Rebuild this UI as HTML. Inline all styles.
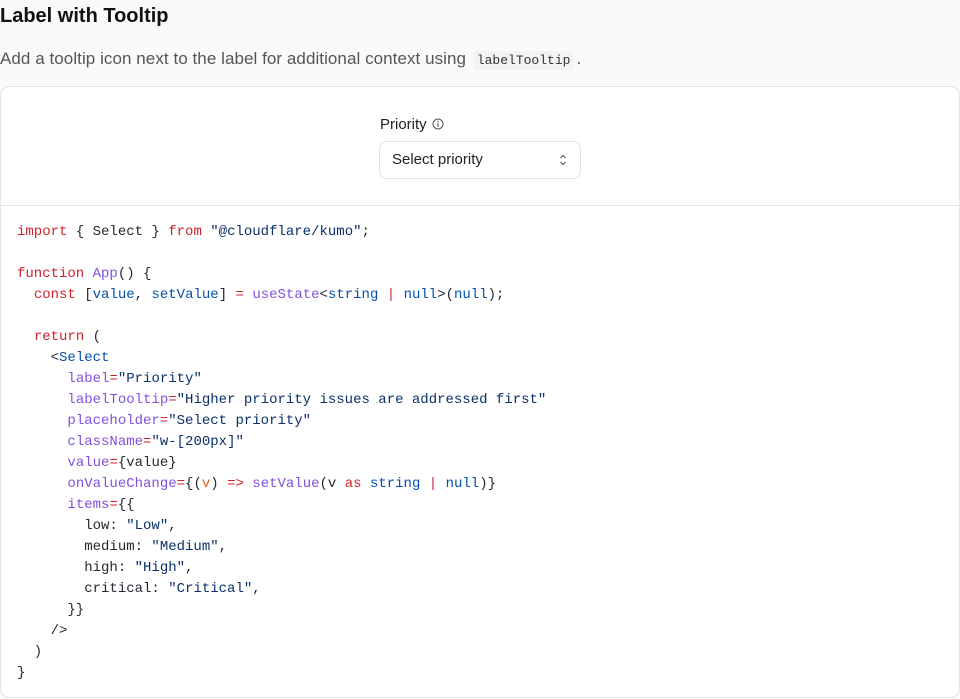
<!DOCTYPE html>
<html><head><style>
html,body{margin:0;height:699px;overflow:hidden}
body{background:#fafafa;font-family:"Liberation Sans",sans-serif;width:960px;position:relative}
h2{position:absolute;left:0;top:3px;margin:0;font-size:20px;font-weight:700;color:#111;line-height:26px}
.desc{position:absolute;left:0;top:48px;font-size:17px;color:#555;line-height:22px;margin:0;letter-spacing:0.06px}
.desc code{font-family:"Liberation Mono",monospace;font-size:13px;color:#333;background:#f3f3f3;padding:2px 4px;border-radius:4px;margin:0 2px;letter-spacing:0}
.card{position:absolute;left:0;top:86px;width:958px;height:610px;border:1px solid #e5e5e5;border-radius:10px;background:#fff;overflow:hidden}
.preview{height:118px;border-bottom:1px solid #e5e5e5;position:relative}
.lbl{position:absolute;left:379px;top:29px;font-size:15px;color:#222;line-height:18px}
.sel{position:absolute;left:378px;top:54px;width:202px;height:38px;border:1px solid #e3e3e3;border-radius:8px;box-sizing:border-box;font-size:15px;color:#222;line-height:36px;padding-left:12px}
pre{margin:0;padding:16px 16px;font-family:"Liberation Mono",monospace;font-size:14px;line-height:21px;color:#24292f}
.k{color:#cf222e}.f{color:#8250df}.b{color:#0550ae}.s{color:#0a3069}.o{color:#e36209}
</style></head><body>
<h2>Label with Tooltip</h2>
<p class="desc">Add a tooltip icon next to the label for additional context using <code>labelTooltip</code>.</p>
<div class="card">
<div class="preview">
<div class="lbl">Priority <svg width="12" height="12" viewBox="0 0 12 12" style="vertical-align:-1px;margin-left:1px"><circle cx="6" cy="6" r="5" fill="none" stroke="#555" stroke-width="1"/><line x1="6" y1="5.2" x2="6" y2="8.7" stroke="#555" stroke-width="1.1"/><circle cx="6" cy="3.5" r=".7" fill="#555"/></svg></div>
<div class="sel">Select priority<svg width="10" height="14" viewBox="0 0 10 14" style="position:absolute;right:12px;top:11px"><path d="M2.5 5 L5 2.5 L7.5 5 M2.5 9 L5 11.5 L7.5 9" fill="none" stroke="#555" stroke-width="1.1"/></svg></div>
</div>
<pre><span class="k">import</span> { Select } <span class="k">from</span> <span class="s">"@cloudflare/kumo"</span>;

<span class="k">function</span> <span class="f">App</span>() {
  <span class="k">const</span> [<span class="b">value</span>, <span class="b">setValue</span>] <span class="k">=</span> <span class="f">useState</span>&lt;<span class="b">string</span> <span class="k">|</span> <span class="b">null</span>&gt;(<span class="b">null</span>);

  <span class="k">return</span> (
    &lt;<span class="b">Select</span>
      <span class="f">label</span><span class="k">=</span><span class="s">"Priority"</span>
      <span class="f">labelTooltip</span><span class="k">=</span><span class="s">"Higher priority issues are addressed first"</span>
      <span class="f">placeholder</span><span class="k">=</span><span class="s">"Select priority"</span>
      <span class="f">className</span><span class="k">=</span><span class="s">"w-[200px]"</span>
      <span class="f">value</span><span class="k">=</span>{value}
      <span class="f">onValueChange</span><span class="k">=</span>{(<span class="o">v</span>) <span class="k">=&gt;</span> <span class="f">setValue</span>(v <span class="k">as</span> <span class="b">string</span> <span class="k">|</span> <span class="b">null</span>)}
      <span class="f">items</span><span class="k">=</span>{{
        low: <span class="s">"Low"</span>,
        medium: <span class="s">"Medium"</span>,
        high: <span class="s">"High"</span>,
        critical: <span class="s">"Critical"</span>,
      }}
    /&gt;
  )
}</pre>
</div>
</body></html>
